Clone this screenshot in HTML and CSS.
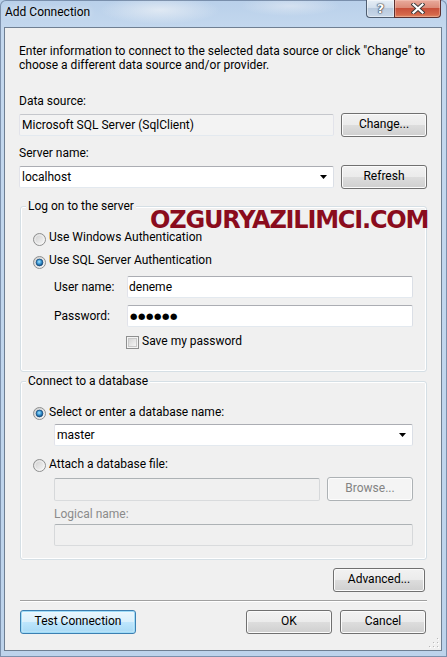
FILE: index.html
```html
<!DOCTYPE html>
<html>
<head>
<meta charset="utf-8">
<title>Add Connection</title>
<link rel="stylesheet" href="styles.css">
</head>
<body>
<div class="window">
  <div class="titlebar">
    <span class="title">Add Connection</span>
    <div class="caption">
      <div class="cap help">?</div>
      <div class="cap close">
        <svg width="14" height="11" viewBox="0 0 14 11"><path d="M2.5 1.5 L11.5 9.5 M11.5 1.5 L2.5 9.5" stroke="#3b3b3b" stroke-width="4" stroke-linecap="square"/><path d="M2.5 1.5 L11.5 9.5 M11.5 1.5 L2.5 9.5" stroke="#ffffff" stroke-width="2.2" stroke-linecap="square"/></svg>
      </div>
    </div>
  </div>
  <div class="client">
    <svg class="defs" width="0" height="0">
      <defs>
        <linearGradient id="rg" x1="0" y1="0" x2="1" y2="1"><stop offset="0" stop-color="#cbcbcb"/><stop offset="1" stop-color="#fbfbfb"/></linearGradient>
        <radialGradient id="rb" cx="0.45" cy="0.4" r="0.6"><stop offset="0" stop-color="#a9e6ff"/><stop offset="0.5" stop-color="#3c9ad6"/><stop offset="1" stop-color="#0f4579"/></radialGradient>
        <linearGradient id="cg" x1="0" y1="0" x2="1" y2="1"><stop offset="0" stop-color="#d3d3d3"/><stop offset="1" stop-color="#f7f7f7"/></linearGradient>
      </defs>
    </svg>
    <div class="watermark">OZGURYAZILIMCI.COM</div>
    <p class="intro">Enter information to connect to the selected data source or click "Change" to<br>choose a different data source and/or provider.</p>
    <div class="label lbl-ds">Data source:</div>
    <div class="row">
      <div class="field readonly wide">Microsoft SQL Server (SqlClient)</div>
      <div class="btn side">Change...</div>
    </div>
    <div class="label lbl-sn">Server name:</div>
    <div class="row">
      <div class="field combo wide"><span>localhost</span><svg class="arrow" width="7" height="4" viewBox="0 0 7 4"><path d="M0 0H7L3.5 4Z" fill="#000"/></svg></div>
      <div class="btn side">Refresh</div>
    </div>

    <fieldset class="group g1">
      <legend>Log on to the server</legend>
      <div class="gbody">
        <div class="opt">
          <svg class="radio" width="13" height="13" viewBox="0 0 13 13"><circle cx="6.5" cy="6.5" r="6" fill="url(#rg)" stroke="#8e8f8f"/><circle cx="6.5" cy="6.5" r="4.6" fill="none" stroke="#f6f6f6" stroke-opacity="0.7"/></svg>
          <span>Use Windows Authentication</span>
        </div>
        <div class="opt opt2">
          <svg class="radio" width="13" height="13" viewBox="0 0 13 13"><circle cx="6.5" cy="6.5" r="6" fill="url(#rg)" stroke="#8e8f8f"/><circle cx="6.5" cy="6.5" r="3.4" fill="url(#rb)" stroke="#1b4f80" stroke-width="0.8"/></svg>
          <span>Use SQL Server Authentication</span>
        </div>
        <div class="cred">
          <span class="cred-label">User name:</span>
          <div class="field cred-field">deneme</div>
        </div>
        <div class="cred cred2">
          <span class="cred-label">Password:</span>
          <div class="field cred-field pw">●●●●●●</div>
        </div>
        <div class="check">
          <svg class="checkbox" width="13" height="13" viewBox="0 0 13 13"><rect x="0.5" y="0.5" width="12" height="12" fill="#f4f4f4" stroke="#8e8f8f"/><rect x="2.5" y="2.5" width="8" height="8" fill="url(#cg)" stroke="#c9c9c9"/></svg>
          <span>Save my password</span>
        </div>
      </div>
    </fieldset>

    <fieldset class="group g2">
      <legend>Connect to a database</legend>
      <div class="gbody">
        <div class="opt opt-db">
          <svg class="radio" width="13" height="13" viewBox="0 0 13 13"><circle cx="6.5" cy="6.5" r="6" fill="url(#rg)" stroke="#8e8f8f"/><circle cx="6.5" cy="6.5" r="3.4" fill="url(#rb)" stroke="#1b4f80" stroke-width="0.8"/></svg>
          <span>Select or enter a database name:</span>
        </div>
        <div class="field combo db-combo"><span>master</span><svg class="arrow" width="7" height="4" viewBox="0 0 7 4"><path d="M0 0H7L3.5 4Z" fill="#000"/></svg></div>
        <div class="opt opt-db opt-attach">
          <svg class="radio" width="13" height="13" viewBox="0 0 13 13"><circle cx="6.5" cy="6.5" r="6" fill="url(#rg)" stroke="#8e8f8f"/><circle cx="6.5" cy="6.5" r="4.6" fill="none" stroke="#f6f6f6" stroke-opacity="0.7"/></svg>
          <span>Attach a database file:</span>
        </div>
        <div class="file-row">
          <div class="field disabled file-field"></div>
          <div class="btn btn-disabled browse">Browse...</div>
        </div>
        <div class="label lbl-logical">Logical name:</div>
        <div class="field disabled logical-field"></div>
      </div>
    </fieldset>

    <div class="adv-row"><div class="btn adv">Advanced...</div></div>
    <div class="sep"></div>
    <div class="footer">
      <div class="btn btn-default test">Test Connection</div>
      <div class="spacer"></div>
      <div class="btn side">OK</div>
      <div class="btn side cancel">Cancel</div>
    </div>
    <svg class="grip" width="10" height="10" viewBox="0 0 10 10">
      <g fill="#ffffff"><rect x="9" y="1" width="1" height="1"/><rect x="9" y="5" width="1" height="1"/><rect x="5" y="5" width="1" height="1"/><rect x="9" y="9" width="1" height="1"/><rect x="5" y="9" width="1" height="1"/><rect x="1" y="9" width="1" height="1"/></g>
      <g fill="#b8b8b8"><rect x="8" y="0" width="1" height="1"/><rect x="8" y="4" width="1" height="1"/><rect x="4" y="4" width="1" height="1"/><rect x="8" y="8" width="1" height="1"/><rect x="4" y="8" width="1" height="1"/><rect x="0" y="8" width="1" height="1"/></g>
    </svg>
  </div>
</div>
</body>
</html>
```
FILE: styles.css
```css
html, body {
  margin: 0;
  padding: 0;
}
body {
  width: 447px;
  height: 657px;
  overflow: hidden;
  font: 12px Roboto, "Noto Sans", sans-serif;
  color: #000;
  background:
    radial-gradient(ellipse 60px 14px at 160px 10px, rgba(235,240,246,0.75), rgba(235,240,246,0) 100%),
    radial-gradient(ellipse 50px 10px at 290px 6px, rgba(230,236,244,0.6), rgba(230,236,244,0) 100%),
    linear-gradient(to bottom, #b9d0ea 0px, #c4d8ee 30px, #bdd3eb 100%);
}
.window {
  box-sizing: border-box;
  width: 447px;
  height: 657px;
  display: flex;
  flex-direction: column;
  box-shadow: inset 0 0 0 1px rgba(70, 90, 120, 0.55);
  border-radius: 6px 6px 0 0;
}
.titlebar {
  height: 27px;
  display: flex;
  align-items: flex-start;
  flex: none;
}
.title {
  padding: 5px 0 0 5px;
  line-height: 15px;
  font-size: 12px;
  color: #000;
  text-shadow: 0 0 6px rgba(255,255,255,0.8);
}
.caption {
  margin-left: auto;
  margin-right: 6px;
  display: flex;
}
.cap {
  box-sizing: border-box;
  height: 18px;
  display: flex;
  align-items: center;
  justify-content: center;
}
.help {
  width: 28px;
  border: 1px solid #4e5d70;
  border-top: none;
  border-right: none;
  border-radius: 0 0 0 4px;
  background: linear-gradient(to bottom, #e6eef6 0%, #d3dfec 45%, #b9cade 50%, #c9d8e9 100%);
  box-shadow: inset 0 0 0 1px rgba(255,255,255,0.45);
  color: #fff;
  font: bold 13px "DejaVu Sans", sans-serif;
  text-shadow: 0 0 1px #2d3440, 0 0 1px #2d3440, 0 0 2px #2d3440;
  padding-bottom: 1px;
}
.close {
  width: 47px;
  border: 1px solid #5b3030;
  border-top: none;
  border-radius: 0 0 4px 0;
  background: linear-gradient(to bottom, #e9ab9d 0%, #dc8b78 45%, #c8503a 50%, #d5674a 85%, #e08a62 100%);
  box-shadow: inset 0 0 0 1px rgba(255,220,210,0.35);
}
.client {
  position: relative;
  box-sizing: border-box;
  flex: 1;
  margin: 0 5px 6px 4px;
  border: 1px solid #6f7f92;
  background: #f0f0f0;
  padding: 16px 14px 0 14px;
}
.defs {
  position: absolute;
  width: 0;
  height: 0;
}
.watermark {
  position: absolute;
  left: 145px;
  top: 178px;
  font: bold 24px "DejaVu Sans", sans-serif;
  letter-spacing: -1.2px;
  line-height: 28px;
  color: #8a0c1d;
  white-space: nowrap;
}
.intro {
  margin: 0;
  line-height: 14px;
}
.label {
  line-height: 15px;
}
.lbl-ds { margin-top: 22px; }
.lbl-sn { margin-top: 9px; }
.row {
  margin-top: 4px;
  height: 24px;
  display: flex;
  align-items: center;
  gap: 7px;
}
.field {
  box-sizing: border-box;
  height: 22px;
  border: 1px solid;
  border-color: #abadb3 #dbdfe6 #e3e9ef #e2e3ea;
  border-radius: 2px;
  background: #fff;
  padding: 0 2px;
  line-height: 20px;
  display: flex;
  align-items: center;
  white-space: nowrap;
}
.wide { width: 315px; }
.readonly {
  background: #f3f3f3;
  border-color: #c5c7cc #e2e3ea #e3e9ef #e2e3ea;
}
.combo .arrow {
  margin-left: auto;
  margin-right: 4px;
}
.btn {
  box-sizing: border-box;
  height: 24px;
  border: 1px solid #707070;
  border-radius: 3px;
  background: linear-gradient(to bottom, #f2f2f2 0%, #ebebeb 50%, #dddddd 50%, #cfcfcf 100%);
  box-shadow: inset 0 0 0 1px #fbfbfb;
  display: flex;
  align-items: center;
  justify-content: center;
  white-space: nowrap;
  line-height: 15px;
  padding-bottom: 1px;
}
.side { width: 86px; }
.btn-default {
  border-color: #3c7fb1;
  background: linear-gradient(to bottom, #eaf6fd 0%, #d9f0fc 50%, #bee6fd 50%, #a7d9f5 100%);
  box-shadow: inset 0 0 0 1px #9fdcf8, inset 0 0 2px 1px rgba(255,255,255,0.6);
}
.btn-disabled {
  border-color: #adb2b5;
  background: #f4f4f4;
  box-shadow: inset 0 0 0 1px #fcfcfc;
  color: #838383;
}
.group {
  box-sizing: border-box;
  width: 407px;
  margin: 10px 0 0 1px;
  padding: 0;
  min-inline-size: 0;
  border: 1px solid #d5dfe5;
  border-radius: 3px;
  box-shadow: inset 0 0 0 1px #ffffff;
}
.group legend {
  margin-left: 5px;
  padding: 0 2px;
  line-height: 15px;
  background: #f0f0f0;
}
.g2 { margin-top: 2px; }
.gbody {
  padding: 16px 13px 22px 12px;
}
.g2 .gbody { padding-bottom: 13px; }
.opt {
  display: flex;
  align-items: flex-start;
  gap: 3px;
  line-height: 15px;
  height: 15px;
}
.opt .radio {
  margin-top: 3px;
  flex: none;
}
.opt-db .radio { margin-top: 2px; }
.opt2 { margin-top: 8px; }
.cred {
  margin-top: 8px;
  margin-left: 21px;
  display: flex;
  align-items: center;
  height: 22px;
}
.cred2 { margin-top: 7px; }
.cred-label {
  width: 73px;
  line-height: 15px;
}
.cred-field {
  width: 286px;
  padding-left: 1px;
}
.pw {
  font: 8.5px "DejaVu Sans", sans-serif;
  letter-spacing: 0.6px;
  padding-left: 2px;
}
.check {
  margin-top: 7px;
  margin-left: 93px;
  display: flex;
  align-items: flex-start;
  gap: 3px;
  line-height: 15px;
  height: 15px;
}
.checkbox {
  margin-top: 2px;
  flex: none;
}
.db-combo {
  margin-top: 4px;
  margin-left: 21px;
  width: 359px;
}
.opt-attach { margin-top: 11px; }
.file-row {
  margin-top: 5px;
  margin-left: 21px;
  display: flex;
  align-items: flex-start;
  gap: 7px;
  height: 24px;
}
.disabled {
  background: #f0f0f0;
  border-color: #adb2b5 #d6d8da #d9dbdd #d6d8da;
}
.file-field {
  width: 266px;
  height: 23px;
  margin-top: 1px;
}
.browse { width: 86px; }
.lbl-logical {
  margin-top: 6px;
  margin-left: 21px;
  color: #8b8b8b;
}
.logical-field {
  margin-top: 2px;
  margin-left: 21px;
  width: 359px;
}
.adv-row {
  margin-top: 8px;
  display: flex;
  justify-content: flex-end;
  padding-right: 2px;
}
.adv { width: 92px; }
.sep {
  margin: 8px 0 0 1px;
  height: 1px;
  width: 407px;
  background: #a0a0a0;
  border-bottom: 1px solid #ffffff;
}
.footer {
  margin-top: 8px;
  display: flex;
  align-items: center;
  gap: 8px;
  padding: 0 1px;
}
.test { width: 116px; }
.spacer { flex: 1; }
.grip {
  position: absolute;
  right: 2px;
  bottom: 2px;
}
```
